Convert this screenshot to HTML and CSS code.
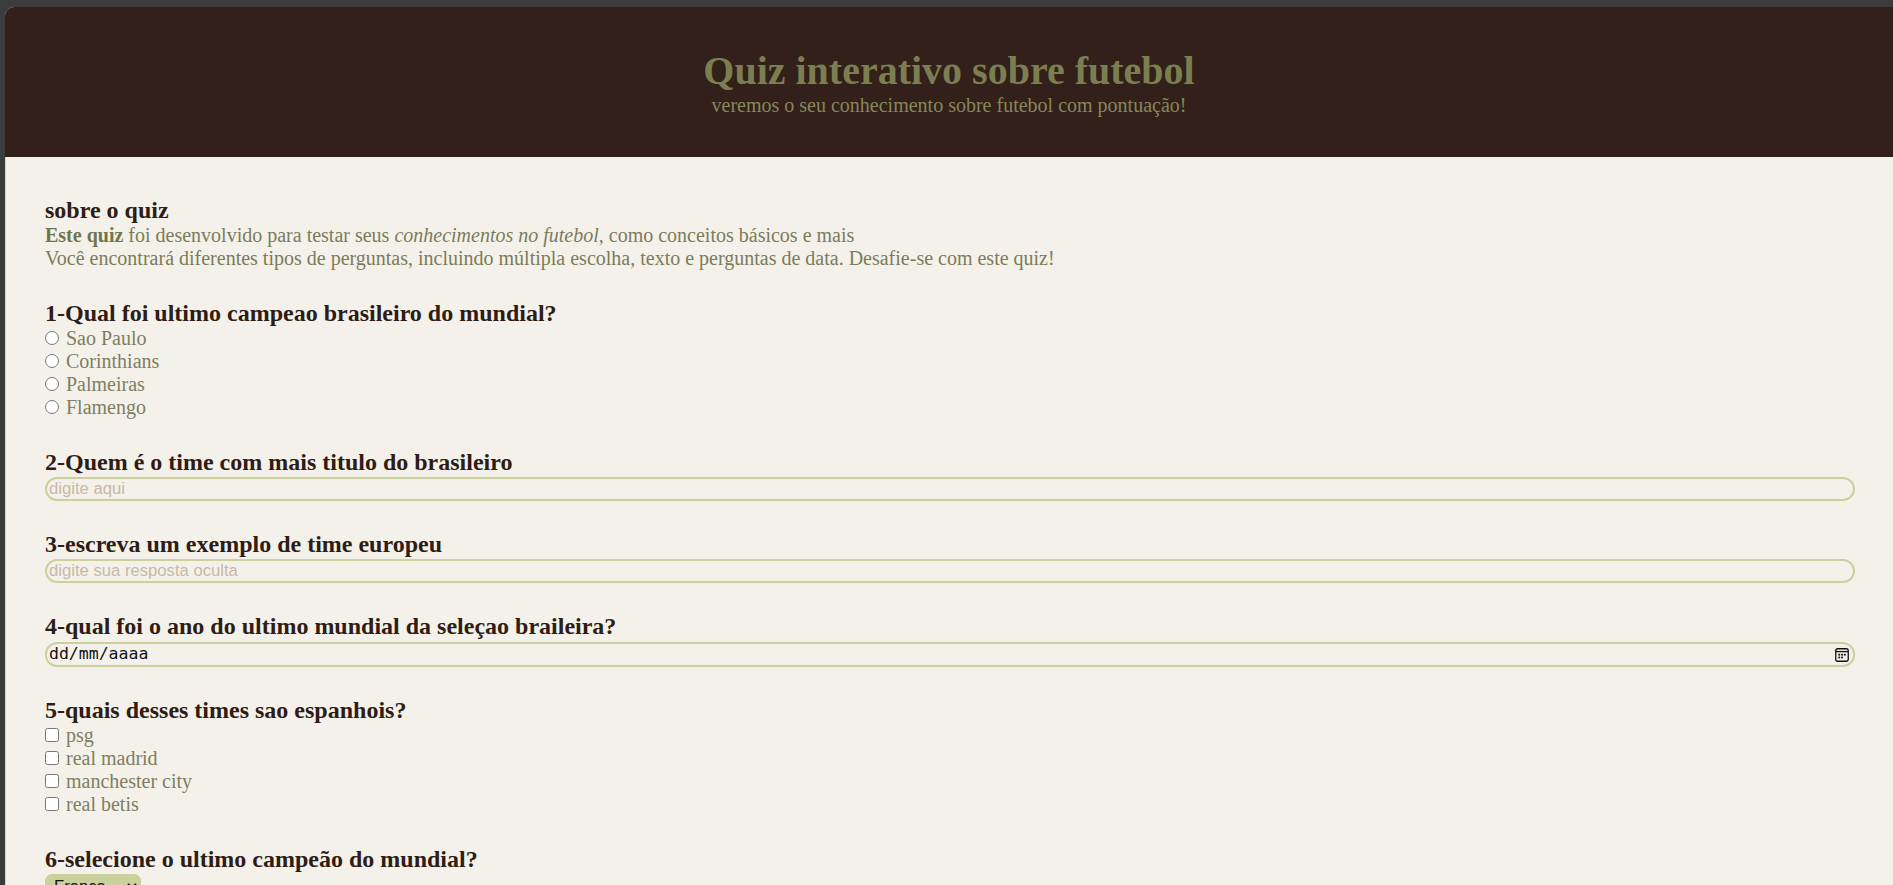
FILE: index.html
```html
<!DOCTYPE html>
<html lang="pt-BR">
<head>
<meta charset="utf-8">
<title>Quiz interativo sobre futebol</title>
<link rel="stylesheet" href="styles.css">
</head>
<body>
<div class="window">
  <header class="hero">
    <h1 class="hero-title">Quiz interativo sobre futebol</h1>
    <p class="hero-sub">veremos o seu conhecimento sobre futebol com pontuação!</p>
  </header>
  <main class="content">
    <section class="block">
      <h3 class="q-title">sobre o quiz</h3>
      <p class="about"><strong class="accent">Este quiz</strong> foi desenvolvido para testar seus <em>conhecimentos no futebol</em>, como conceitos básicos e mais<br>Você encontrará diferentes tipos de perguntas, incluindo múltipla escolha, texto e perguntas de data. Desafie-se com este quiz!</p>
    </section>

    <section class="block">
      <h3 class="q-title">1-Qual foi ultimo campeao brasileiro do mundial?</h3>
      <label class="opt"><input class="mark" type="radio" name="q1"> Sao Paulo</label>
      <label class="opt"><input class="mark" type="radio" name="q1"> Corinthians</label>
      <label class="opt"><input class="mark" type="radio" name="q1"> Palmeiras</label>
      <label class="opt"><input class="mark" type="radio" name="q1"> Flamengo</label>
    </section>

    <section class="block">
      <h3 class="q-title">2-Quem é o time com mais titulo do brasileiro</h3>
      <input class="field" type="text" placeholder="digite aqui">
    </section>

    <section class="block">
      <h3 class="q-title">3-escreva um exemplo de time europeu</h3>
      <input class="field" type="password" placeholder="digite sua resposta oculta">
    </section>

    <section class="block">
      <h3 class="q-title">4-qual foi o ano do ultimo mundial da seleçao braileira?</h3>
      <div class="field date-field">
        <span class="date-text">dd/mm/aaaa</span>
        <svg class="cal" width="14" height="14" viewBox="0 0 14 14" aria-hidden="true">
          <rect x="0.75" y="0.75" width="12.5" height="12.5" rx="1.8" fill="none" stroke="#111" stroke-width="1.3"/>
          <line x1="0.75" y1="3.6" x2="13.25" y2="3.6" stroke="#111" stroke-width="1.3"/>
          <rect x="3.3" y="5.8" width="1.8" height="1.8" fill="#111"/>
          <rect x="6.1" y="5.8" width="1.8" height="1.8" fill="#111"/>
          <rect x="8.9" y="5.8" width="1.8" height="1.8" fill="#111"/>
          <rect x="3.3" y="8.6" width="1.8" height="1.8" fill="#111"/>
          <rect x="6.1" y="8.6" width="1.8" height="1.8" fill="#111"/>
        </svg>
      </div>
    </section>

    <section class="block">
      <h3 class="q-title">5-quais desses times sao espanhois?</h3>
      <label class="opt"><input class="mark" type="checkbox"> psg</label>
      <label class="opt"><input class="mark" type="checkbox"> real madrid</label>
      <label class="opt"><input class="mark" type="checkbox"> manchester city</label>
      <label class="opt"><input class="mark" type="checkbox"> real betis</label>
    </section>

    <section class="block">
      <h3 class="q-title">6-selecione o ultimo campeão do mundial?</h3>
      <div class="select-row">
        <select class="pick">
          <option>França</option>
          <option>Argentina</option>
          <option>Alemanha</option>
          <option>Espanha</option>
        </select>
      </div>
    </section>

    <section class="block">
      <button class="send" type="button">enviar respostas</button>
    </section>
  </main>
</div>
</body>
</html>
```

FILE: styles.css
```css
html, body {
  margin: 0;
  padding: 0;
}

body {
  background: #3c3c3c;
  font-family: "Liberation Serif", "Times New Roman", serif;
  height: 100vh;
  overflow: hidden;
}

.window {
  margin: 7px 0 0 5px;
  background: #f4f1ea;
  border-top-left-radius: 9px;
  overflow: hidden;
  min-height: 1400px;
}

.hero {
  background: #33201a;
  padding: 41px 0 40px;
  text-align: center;
}

.hero-title {
  margin: 0;
  font-size: 40px;
  line-height: 46px;
  font-weight: bold;
  color: #7b7e4f;
}

.hero-sub {
  margin: 0;
  font-size: 20px;
  line-height: 23px;
  color: #86875a;
}

.content {
  display: flex;
  flex-direction: column;
  gap: 30px;
  padding: 40px 38px 40px 39px;
  border-left: 1px solid #d9d6cf;
}

.block {
  display: flex;
  flex-direction: column;
}

.q-title {
  margin: 0;
  font-size: 24px;
  line-height: 27px;
  font-weight: bold;
  color: #2e1c15;
}

.about {
  margin: 0;
  font-size: 20px;
  line-height: 23px;
  color: #7b7c5a;
}

.accent {
  color: #71764a;
}

.opt {
  display: block;
  font-size: 20px;
  line-height: 23px;
  color: #7d7f60;
}

.mark {
  width: 14px;
  height: 14px;
  margin: 2px 2px 0 0;
}

.field {
  display: block;
  box-sizing: border-box;
  width: 100%;
  height: 24px;
  margin: 1px 0 0;
  padding: 0 2px;
  border: 2px solid #cbd09d;
  border-radius: 12px;
  background: transparent;
  font-family: "Liberation Sans", Arial, sans-serif;
  font-size: 16.67px;
  color: #222;
  outline: none;
}

.field::placeholder {
  color: #c9b8a7;
}

.date-field {
  display: flex;
  align-items: center;
  justify-content: space-between;
  height: 25px;
  margin-top: 2px;
  padding: 0 4px 0 2px;
}

.date-text {
  font-family: "DejaVu Sans Mono", "Liberation Mono", monospace;
  font-size: 16.5px;
  line-height: 18px;
  color: #111;
  margin-top: -1px;
}

.cal {
  display: block;
}

.select-row {
  display: flex;
  padding-top: 1px;
}

.pick {
  width: 96px;
  height: 24px;
  background: #cbd19c;
  border: 1px solid #cbd19c;
  border-radius: 7px;
  font-family: "Liberation Sans", Arial, sans-serif;
  font-size: 16.67px;
  color: #111;
  padding: 0 4px;
}

.send {
  align-self: flex-start;
  background: #33201a;
  color: #f4f1ea;
  border: none;
  border-radius: 12px;
  padding: 8px 20px;
  font-family: "Liberation Serif", serif;
  font-size: 20px;
}
```
